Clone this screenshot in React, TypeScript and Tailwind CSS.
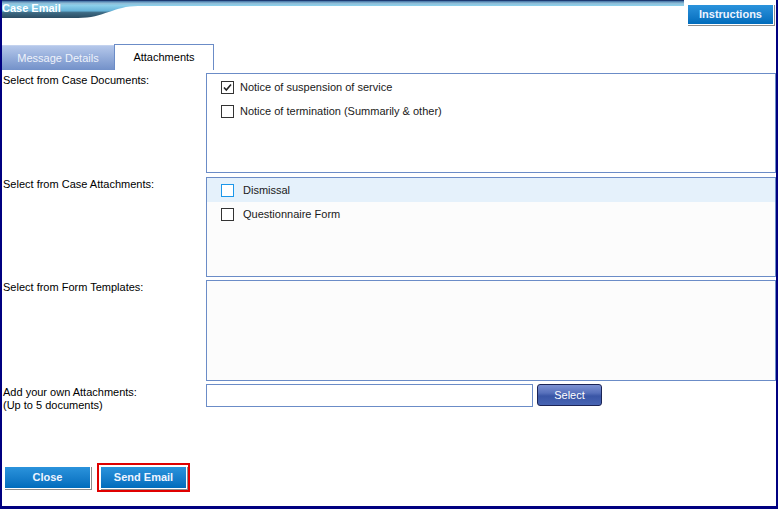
import React from 'react';

type Item = { label: string; checked?: boolean; active?: boolean };

const caseDocuments: Item[] = [
  { label: 'Notice of suspension of service', checked: true },
  { label: 'Notice of termination (Summarily & other)' },
];

const caseAttachments: Item[] = [
  { label: 'Dismissal', active: true },
  { label: 'Questionnaire Form' },
];

function CheckBox({ checked, active }: { checked?: boolean; active?: boolean }) {
  return (
    <span
      className={
        'flex h-[13px] w-[13px] shrink-0 items-center justify-center border bg-white ' +
        (active ? 'border-[#1c97ea]' : 'border-[#333333]')
      }
    >
      {checked && (
        <svg width="11" height="11" viewBox="0 0 11 11">
          <path d="M2 5.5 L4.3 8 L9 2.5" fill="none" stroke="#222" strokeWidth="1.6" />
        </svg>
      )}
    </span>
  );
}

function TitleStrip() {
  return (
    <div className="relative h-[18px] flex-1">
      <svg className="absolute left-0 top-0" width="682" height="18" viewBox="0 0 682 18">
        <defs>
          <linearGradient id="strip" x1="0" y1="0" x2="0" y2="18" gradientUnits="userSpaceOnUse">
            <stop offset="0" stopColor="#23457f" />
            <stop offset="0.08" stopColor="#4f7fae" />
            <stop offset="0.18" stopColor="#8fbcd6" />
            <stop offset="0.3" stopColor="#8ccfea" />
            <stop offset="0.6" stopColor="#66b3d8" />
            <stop offset="0.7" stopColor="#3d6a84" />
            <stop offset="1" stopColor="#2b4c62" />
          </linearGradient>
        </defs>
        <path d="M0 0 H682 V6 H136 C112 6 102 18 76 18 H0 Z" fill="url(#strip)" />
        <rect x="0" y="0" width="682" height="1" fill="#1d3a72" />
      </svg>
      <span className="absolute left-[0px] top-[2px] text-[11px] font-bold leading-[13px] text-white">
        Case Email
      </span>
    </div>
  );
}

function BlueButton({ children, className }: { children: React.ReactNode; className?: string }) {
  return (
    <button
      className={
        'flex items-center justify-center border border-white bg-gradient-to-b from-[#2a93dc] to-[#006cbc] text-[11px] font-bold text-[#eef4ff] shadow-[1px_1px_0_#8c8c8c] ' +
        (className ?? '')
      }
    >
      {children}
    </button>
  );
}

function ListBox({ items, gap, pad, height }: { items: Item[]; gap: string; pad: string; height: string }) {
  return (
    <div className={'border border-[#6b8cc7] bg-[#fcfcfc] ' + height + ' ' + pad}>
      {items.map((it) => (
        <div
          key={it.label}
          className={
            'flex h-[24px] items-center pl-[14px] ' + gap + ' ' + (it.active ? 'bg-[#e5f1fb]' : '')
          }
        >
          <CheckBox checked={it.checked} active={it.active} />
          <span className="text-[11px] text-[#1a1a1a]">{it.label}</span>
        </div>
      ))}
    </div>
  );
}

export default function App() {
  return (
    <div className="flex h-[509px] w-[778px] flex-col border-b-[3px] border-l-2 border-r-2 border-[#000080] bg-white font-['Liberation_Sans',Arial,sans-serif] text-black">
      {/* header */}
      <div className="flex h-[44px] items-start">
        <TitleStrip />
        <BlueButton className="mr-[2px] ml-[4px] mt-[4px] h-[21px] w-[87px]">Instructions</BlueButton>
      </div>

      {/* tabs */}
      <div className="flex h-[26px] items-end">
        <div className="flex h-[25px] w-[112px] items-center justify-center border-t border-[#c3d2ee] bg-gradient-to-b from-[#b4c7ea] to-[#7391c9] text-[11px] text-[#eef2fa]">
          Message Details
        </div>
        <div className="flex h-[26px] w-[100px] items-center justify-center border-l border-r border-t border-[#6b8cc7] bg-white text-[11px]">
          Attachments
        </div>
      </div>

      {/* sections */}
      <div className="mt-[3px] grid grid-cols-[204px_1fr] text-[11px] leading-[13px]">
        <div className="pl-[1px] pt-[1px]">Select from Case Documents:</div>
        <ListBox items={caseDocuments} gap="gap-[6px]" pad="pt-[1px] bg-white" height="h-[100px]" />

        <div className="mt-[4px] pl-[1px] pt-[1px]">Select from Case Attachments:</div>
        <div className="mt-[4px]">
          <ListBox items={caseAttachments} gap="gap-[9px]" pad="" height="h-[100px]" />
        </div>

        <div className="mt-[3px] pl-[1px] pt-[1px]">Select from Form Templates:</div>
        <div className="mt-[3px] h-[101px] border border-[#6b8cc7] bg-[#fcfcfc]" />

        <div className="mt-[3px] pl-[1px] pt-[2px]">
          <div>Add your own Attachments:</div>
          <div>(Up to 5 documents)</div>
        </div>
        <div className="mt-[3px] flex items-start gap-[4px]">
          <input className="h-[23px] w-[327px] border border-[#6b8cc7] bg-white outline-none" />
          <button className="h-[22px] w-[65px] rounded-[3px] border border-[#1b2456] bg-[linear-gradient(#7d92d2_0%,#5770bb_40%,#3a56a6_55%,#4764b3_100%)] text-[11px] text-white">
            Select
          </button>
        </div>
      </div>

      {/* footer buttons */}
      <div className="mt-auto mb-[14px] flex items-center pl-[2px]">
        <BlueButton className="h-[23px] w-[87px]">Close</BlueButton>
        <div className="ml-[6px] border-2 border-[#e00000] p-[1px]">
          <BlueButton className="h-[23px] w-[87px]">Send Email</BlueButton>
        </div>
      </div>
    </div>
  );
}
